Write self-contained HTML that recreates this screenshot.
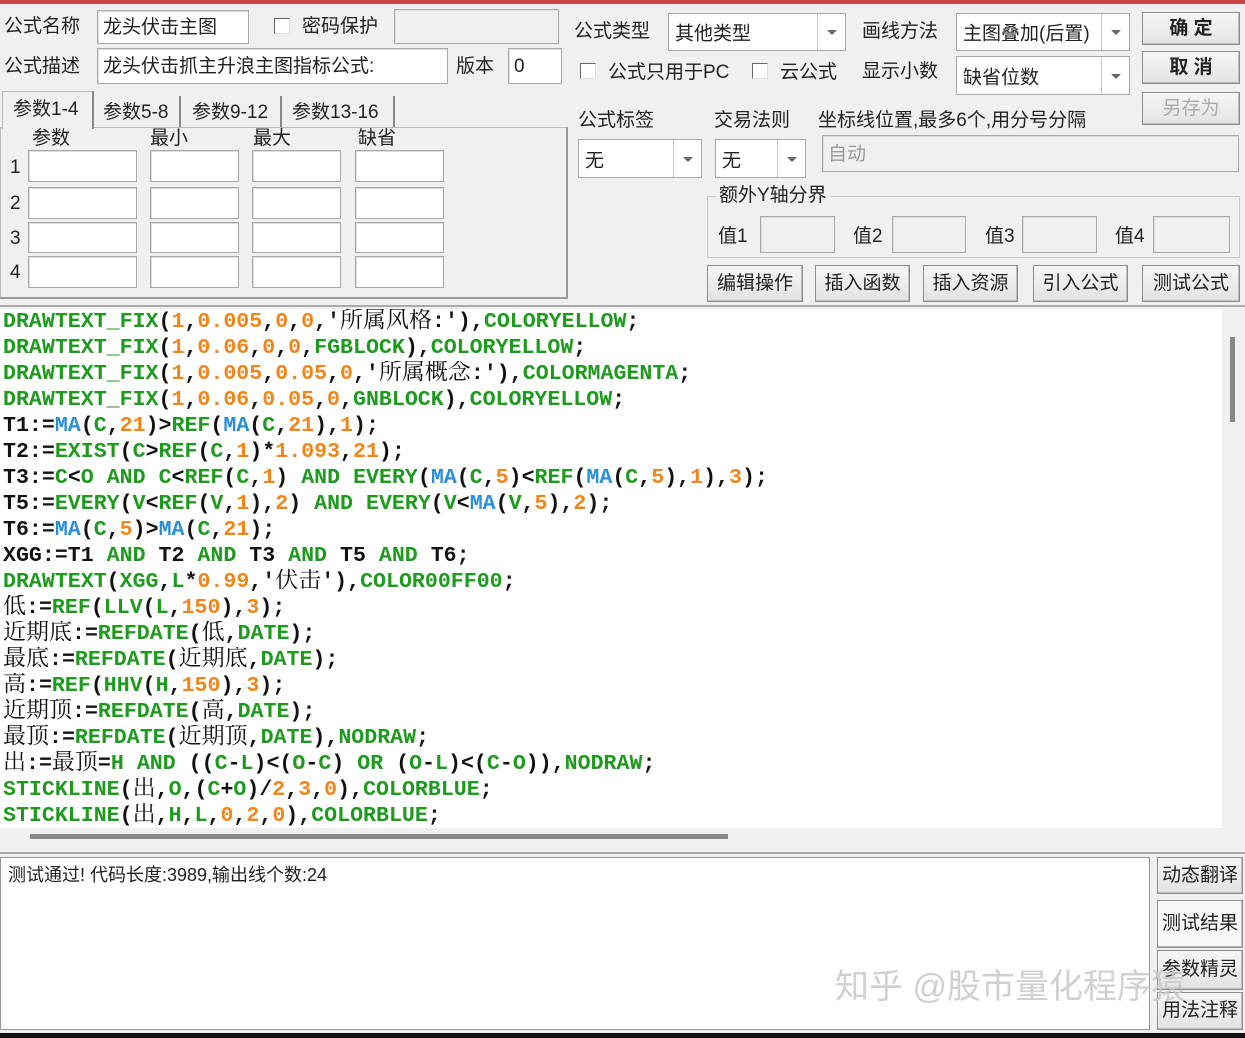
<!DOCTYPE html>
<html><head><meta charset="utf-8"><style>
*{box-sizing:border-box;margin:0;padding:0}
body{width:1245px;height:1038px;background:#f0f0f0;position:relative;overflow:hidden;font-family:"Liberation Sans","Noto Sans CJK SC",sans-serif;font-size:19px;color:#222}
.a{position:absolute;white-space:nowrap}
.in{position:absolute;background:#fff;border:1px solid #a8a8a8;box-shadow:inset 1px 1px 0 #ddd}
.gr{background:#f0f0f0}
.lb{position:absolute;line-height:1;white-space:nowrap}
.sel{position:absolute;background:#fff;border:1px solid #a8a8a8}
.sel .ar{position:absolute;right:0;top:0;bottom:0;width:28px;border-left:1px solid #c8c8c8}
.sel .ar:after{content:"";position:absolute;left:9px;top:50%;margin-top:-2px;border:5px solid transparent;border-top:5px solid #666}
.sel span{position:absolute;left:6px;top:50%;transform:translateY(-50%)}
.btn{position:absolute;background:linear-gradient(#f6f6f6,#e2e2e2);border:1px solid #8e8e8e;box-shadow:inset -1px -1px 0 #bbb;text-align:center;font-weight:bold}
.cb{position:absolute;width:16px;height:16px;background:#fff;border:1px solid #666;border-right-color:#ddd;border-bottom-color:#ddd}
#code{position:absolute;left:0;top:309px;width:1222px;height:519px;background:#fff;overflow:hidden;font-family:"Liberation Mono","Noto Sans CJK SC",monospace;font-weight:bold;font-size:21.6px;color:#111}
#code div{height:26px;line-height:26px;padding-left:3px;white-space:pre;overflow:hidden}
.g{color:#1e9a1e}.o{color:#f0861a}.b{color:#2a8fd6}.c{font-family:"Noto Serif CJK SC","Noto Sans CJK SC",serif;font-weight:normal;font-size:23px;line-height:0}
</style></head><body>
<div class="a" style="left:0;top:0;width:1245px;height:4px;background:#cc4444"></div>

<div class="lb" style="left:4px;top:17px">公式名称</div>
<div class="in" style="left:97px;top:10px;width:152px;height:34px"><span class="lb" style="left:5px;top:7px">龙头伏击主图</span></div>
<div class="cb" style="left:274px;top:18px"></div>
<div class="lb" style="left:302px;top:17px">密码保护</div>
<div class="in gr" style="left:394px;top:9px;width:165px;height:35px"></div>
<div class="lb" style="left:4px;top:57px">公式描述</div>
<div class="in" style="left:97px;top:48px;width:351px;height:36px"><span class="lb" style="left:5px;top:8px">龙头伏击抓主升浪主图指标公式:</span></div>
<div class="lb" style="left:456px;top:57px">版本</div>
<div class="in" style="left:508px;top:48px;width:54px;height:36px"><span class="lb" style="left:5px;top:8px">0</span></div>

<div class="lb" style="left:574px;top:22px">公式类型</div>
<div class="sel" style="left:668px;top:13px;width:178px;height:38px"><span>其他类型</span><div class="ar"></div></div>
<div class="lb" style="left:862px;top:22px">画线方法</div>
<div class="sel" style="left:956px;top:13px;width:174px;height:38px"><span>主图叠加(后置)</span><div class="ar"></div></div>
<div class="cb" style="left:580px;top:63px"></div>
<div class="lb" style="left:608px;top:63px">公式只用于PC</div>
<div class="cb" style="left:752px;top:63px"></div>
<div class="lb" style="left:780px;top:63px">云公式</div>
<div class="lb" style="left:862px;top:62px">显示小数</div>
<div class="sel" style="left:956px;top:56px;width:174px;height:39px"><span>缺省位数</span><div class="ar"></div></div>

<div class="btn" style="left:1142px;top:12px;width:98px;height:33px;line-height:31px">确 定</div>
<div class="btn" style="left:1142px;top:51px;width:98px;height:33px;line-height:31px">取 消</div>
<div class="btn" style="left:1142px;top:92px;width:98px;height:33px;line-height:31px;color:#aaa;font-weight:normal">另存为</div>

<!-- tabs -->
<div class="a" style="left:0;top:127px;width:568px;height:172px;border:1px solid #bbb;border-right:2px solid #999;border-bottom:2px solid #999;background:#f0f0f0"></div>
<div class="a" style="left:2px;top:91px;width:92px;height:38px;background:#f0f0f0;border:1px solid #bbb;border-bottom:none;border-right:2px solid #888"></div>
<div class="lb" style="left:13px;top:100px">参数1-4</div>
<div class="a" style="left:94px;top:96px;width:87px;height:31px;border-right:2px solid #888"></div>
<div class="lb" style="left:103px;top:103px">参数5-8</div>
<div class="a" style="left:181px;top:96px;width:101px;height:31px;border-right:2px solid #888"></div>
<div class="lb" style="left:192px;top:103px">参数9-12</div>
<div class="a" style="left:282px;top:96px;width:113px;height:31px;border-right:2px solid #888"></div>
<div class="lb" style="left:292px;top:103px">参数13-16</div>
<div class="lb" style="left:32px;top:129px">参数</div>
<div class="lb" style="left:150px;top:129px">最小</div>
<div class="lb" style="left:253px;top:129px">最大</div>
<div class="lb" style="left:358px;top:129px">缺省</div>
<div class="lb" style="left:10px;top:158px">1</div><div class="lb" style="left:10px;top:194px">2</div><div class="lb" style="left:10px;top:229px">3</div><div class="lb" style="left:10px;top:263px">4</div>
<div class="in" style="left:28px;top:150px;width:109px;height:32px"></div><div class="in" style="left:150px;top:150px;width:89px;height:32px"></div><div class="in" style="left:252px;top:150px;width:89px;height:32px"></div><div class="in" style="left:355px;top:150px;width:89px;height:32px"></div>
<div class="in" style="left:28px;top:187px;width:109px;height:32px"></div><div class="in" style="left:150px;top:187px;width:89px;height:32px"></div><div class="in" style="left:252px;top:187px;width:89px;height:32px"></div><div class="in" style="left:355px;top:187px;width:89px;height:32px"></div>
<div class="in" style="left:28px;top:222px;width:109px;height:31px"></div><div class="in" style="left:150px;top:222px;width:89px;height:31px"></div><div class="in" style="left:252px;top:222px;width:89px;height:31px"></div><div class="in" style="left:355px;top:222px;width:89px;height:31px"></div>
<div class="in" style="left:28px;top:256px;width:109px;height:32px"></div><div class="in" style="left:150px;top:256px;width:89px;height:32px"></div><div class="in" style="left:252px;top:256px;width:89px;height:32px"></div><div class="in" style="left:355px;top:256px;width:89px;height:32px"></div>

<div class="lb" style="left:578px;top:111px">公式标签</div>
<div class="sel" style="left:578px;top:139px;width:124px;height:39px"><span>无</span><div class="ar"></div></div>
<div class="lb" style="left:714px;top:111px">交易法则</div>
<div class="sel" style="left:715px;top:139px;width:91px;height:39px"><span>无</span><div class="ar"></div></div>
<div class="lb" style="left:818px;top:111px">坐标线位置,最多6个,用分号分隔</div>
<div class="in gr" style="left:822px;top:135px;width:417px;height:37px"><span class="lb" style="left:5px;top:9px;color:#999">自动</span></div>

<div class="a" style="left:707px;top:196px;width:533px;height:62px;border:1px solid #c8c8c8"></div>
<div class="lb" style="left:716px;top:186px;background:#f0f0f0;padding:0 3px">额外Y轴分界</div>
<div class="lb" style="left:718px;top:227px">值1</div><div class="in gr" style="left:760px;top:216px;width:75px;height:37px"></div>
<div class="lb" style="left:853px;top:227px">值2</div><div class="in gr" style="left:892px;top:216px;width:74px;height:37px"></div>
<div class="lb" style="left:985px;top:227px">值3</div><div class="in gr" style="left:1022px;top:216px;width:75px;height:37px"></div>
<div class="lb" style="left:1115px;top:227px">值4</div><div class="in gr" style="left:1153px;top:216px;width:77px;height:37px"></div>

<div class="btn" style="left:707px;top:265px;width:96px;height:37px;line-height:35px;font-weight:normal">编辑操作</div>
<div class="btn" style="left:815px;top:265px;width:95px;height:37px;line-height:35px;font-weight:normal">插入函数</div>
<div class="btn" style="left:923px;top:265px;width:95px;height:37px;line-height:35px;font-weight:normal">插入资源</div>
<div class="btn" style="left:1033px;top:265px;width:95px;height:37px;line-height:35px;font-weight:normal">引入公式</div>
<div class="btn" style="left:1142px;top:265px;width:98px;height:37px;line-height:35px;font-weight:normal">测试公式</div>

<div class="a" style="left:0;top:305px;width:1245px;height:2px;background:#aaa"></div>
<div id="code">
<div><span class="g">DRAWTEXT_FIX</span>(<span class="o">1</span>,<span class="o">0.005</span>,<span class="o">0</span>,<span class="o">0</span>,'<span class="c">所属风格</span>:'),<span class="g">COLORYELLOW</span>;</div>
<div><span class="g">DRAWTEXT_FIX</span>(<span class="o">1</span>,<span class="o">0.06</span>,<span class="o">0</span>,<span class="o">0</span>,<span class="g">FGBLOCK</span>),<span class="g">COLORYELLOW</span>;</div>
<div><span class="g">DRAWTEXT_FIX</span>(<span class="o">1</span>,<span class="o">0.005</span>,<span class="o">0.05</span>,<span class="o">0</span>,'<span class="c">所属概念</span>:'),<span class="g">COLORMAGENTA</span>;</div>
<div><span class="g">DRAWTEXT_FIX</span>(<span class="o">1</span>,<span class="o">0.06</span>,<span class="o">0.05</span>,<span class="o">0</span>,<span class="g">GNBLOCK</span>),<span class="g">COLORYELLOW</span>;</div>
<div>T1:=<span class="b">MA</span>(<span class="g">C</span>,<span class="o">21</span>)&gt;<span class="g">REF</span>(<span class="b">MA</span>(<span class="g">C</span>,<span class="o">21</span>),<span class="o">1</span>);</div>
<div>T2:=<span class="g">EXIST</span>(<span class="g">C</span>&gt;<span class="g">REF</span>(<span class="g">C</span>,<span class="o">1</span>)*<span class="o">1.093</span>,<span class="o">21</span>);</div>
<div>T3:=<span class="g">C</span>&lt;<span class="g">O</span> <span class="g">AND</span> <span class="g">C</span>&lt;<span class="g">REF</span>(<span class="g">C</span>,<span class="o">1</span>) <span class="g">AND</span> <span class="g">EVERY</span>(<span class="b">MA</span>(<span class="g">C</span>,<span class="o">5</span>)&lt;<span class="g">REF</span>(<span class="b">MA</span>(<span class="g">C</span>,<span class="o">5</span>),<span class="o">1</span>),<span class="o">3</span>);</div>
<div>T5:=<span class="g">EVERY</span>(<span class="g">V</span>&lt;<span class="g">REF</span>(<span class="g">V</span>,<span class="o">1</span>),<span class="o">2</span>) <span class="g">AND</span> <span class="g">EVERY</span>(<span class="g">V</span>&lt;<span class="b">MA</span>(<span class="g">V</span>,<span class="o">5</span>),<span class="o">2</span>);</div>
<div>T6:=<span class="b">MA</span>(<span class="g">C</span>,<span class="o">5</span>)&gt;<span class="b">MA</span>(<span class="g">C</span>,<span class="o">21</span>);</div>
<div>XGG:=T1 <span class="g">AND</span> T2 <span class="g">AND</span> T3 <span class="g">AND</span> T5 <span class="g">AND</span> T6;</div>
<div><span class="g">DRAWTEXT</span>(<span class="g">XGG</span>,<span class="g">L</span>*<span class="o">0.99</span>,'<span class="c">伏击</span>'),<span class="g">COLOR00FF00</span>;</div>
<div><span class="c">低</span>:=<span class="g">REF</span>(<span class="g">LLV</span>(<span class="g">L</span>,<span class="o">150</span>),<span class="o">3</span>);</div>
<div><span class="c">近期底</span>:=<span class="g">REFDATE</span>(<span class="c">低</span>,<span class="g">DATE</span>);</div>
<div><span class="c">最底</span>:=<span class="g">REFDATE</span>(<span class="c">近期底</span>,<span class="g">DATE</span>);</div>
<div><span class="c">高</span>:=<span class="g">REF</span>(<span class="g">HHV</span>(<span class="g">H</span>,<span class="o">150</span>),<span class="o">3</span>);</div>
<div><span class="c">近期顶</span>:=<span class="g">REFDATE</span>(<span class="c">高</span>,<span class="g">DATE</span>);</div>
<div><span class="c">最顶</span>:=<span class="g">REFDATE</span>(<span class="c">近期顶</span>,<span class="g">DATE</span>),<span class="g">NODRAW</span>;</div>
<div><span class="c">出</span>:=<span class="c">最顶</span>=<span class="g">H</span> <span class="g">AND</span> ((<span class="g">C</span>-<span class="g">L</span>)&lt;(<span class="g">O</span>-<span class="g">C</span>) <span class="g">OR</span> (<span class="g">O</span>-<span class="g">L</span>)&lt;(<span class="g">C</span>-<span class="g">O</span>)),<span class="g">NODRAW</span>;</div>
<div><span class="g">STICKLINE</span>(<span class="c">出</span>,<span class="g">O</span>,(<span class="g">C</span>+<span class="g">O</span>)/<span class="o">2</span>,<span class="o">3</span>,<span class="o">0</span>),<span class="g">COLORBLUE</span>;</div>
<div><span class="g">STICKLINE</span>(<span class="c">出</span>,<span class="g">H</span>,<span class="g">L</span>,<span class="o">0</span>,<span class="o">2</span>,<span class="o">0</span>),<span class="g">COLORBLUE</span>;</div>
</div>
<div class="a" style="left:1222px;top:308px;width:20px;height:520px;background:#f0f0f0"></div>
<div class="a" style="left:1230px;top:337px;width:5px;height:85px;background:#888"></div>
<div class="a" style="left:30px;top:834px;width:698px;height:5px;background:#888"></div>
<div class="a" style="left:0;top:852px;width:1245px;height:2px;background:#aaa"></div>

<div class="a" style="left:0;top:857px;width:1150px;height:173px;background:#fff;border:1px solid #999"></div>
<div class="lb" style="left:8px;top:866px;font-size:18px">测试通过! 代码长度:3989,输出线个数:24</div>
<div class="btn" style="left:1157px;top:857px;width:86px;height:37px;line-height:35px;font-weight:normal">动态翻译</div>
<div class="btn" style="left:1157px;top:900px;width:86px;height:48px;line-height:46px;font-weight:normal;background:#f8f8f8">测试结果</div>
<div class="btn" style="left:1157px;top:950px;width:86px;height:40px;line-height:38px;font-weight:normal">参数精灵</div>
<div class="btn" style="left:1157px;top:992px;width:86px;height:38px;line-height:36px;font-weight:normal">用法注释</div>
<div class="lb" style="left:835px;top:970px;font-size:34px;color:rgba(200,200,200,0.85)">知乎 @股市量化程序猿</div>
<div class="a" style="left:0;top:1033px;width:1245px;height:5px;background:#111"></div>
</body></html>
